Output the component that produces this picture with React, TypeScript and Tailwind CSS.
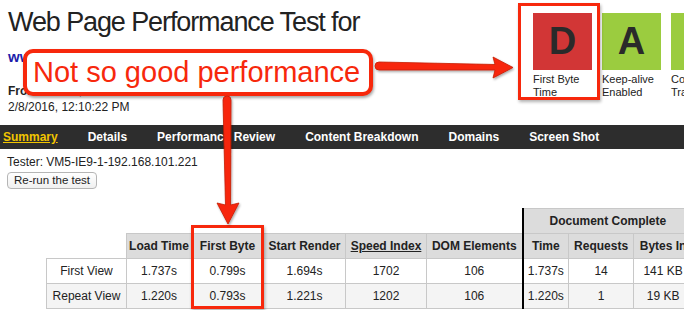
const red = "#f7280c";

function GradeTile({ grade, color, label }: { grade: string; color: string; label: string[] }) {
  return (
    <div className="w-[59px] shrink-0">
      <div className="h-[57px] flex items-center justify-center text-[38px] font-bold text-[#2a2a2a]" style={{ backgroundColor: color }}>
        {grade}
      </div>
      <div className="mt-[3px] text-[11px] leading-[12.5px] text-[#222] whitespace-nowrap">
        {label[0]}
        <br />
        {label[1]}
      </div>
    </div>
  );
}

const th = "bg-[#dcdcdc] border border-[#c8c8c8] font-bold text-[12px] text-center px-0 whitespace-nowrap";
const td = "border border-[#c8c8c8] text-[12px] text-center whitespace-nowrap";
const thick = "border-l-2 border-l-black";

export default function App() {
  const rows = [
    { name: "First View", vals: ["1.737s", "0.799s", "1.694s", "1702", "106", "1.737s", "14", "141 KB"], bg: "bg-white" },
    { name: "Repeat View", vals: ["1.220s", "0.793s", "1.221s", "1202", "106", "1.220s", "1", "19 KB"], bg: "bg-[#f4f4f4]" },
  ];

  return (
    <div className="relative w-[684px] h-[310px] overflow-hidden bg-white text-[#222] font-['Liberation_Sans',Arial,sans-serif]">
      <div className="flex">
        <div className="w-[533px] shrink-0 pl-[8px] pt-[6px]">
          <h1 className="text-[27px] leading-[32px] tracking-[-1.1px] whitespace-nowrap">Web Page Performance Test for</h1>
          <div className="mt-[10px] text-[15px] leading-[18px] font-bold text-[#1d1dab]">www.webpagetest.org</div>
          <div className="mt-[17px] text-[12px] leading-[16px]">
            <b>From:</b> Dulles, VA - IE 9 - Cable
          </div>
          <div className="text-[12px] leading-[16px]">2/8/2016, 12:10:22 PM</div>
        </div>
        <div className="flex gap-[10px] pt-[13px] shrink-0">
          <GradeTile grade="D" color="#d23636" label={["First Byte", "Time"]} />
          <GradeTile grade="A" color="#9bcc3f" label={["Keep-alive", "Enabled"]} />
          <GradeTile grade="A" color="#9bcc3f" label={["Compress", "Transfer"]} />
        </div>
      </div>

      <nav className="mt-[10px] h-[24px] bg-[#2d2d2d] flex items-center gap-[30px] pl-[3px] text-[12px] font-bold text-white whitespace-nowrap">
        <span className="text-[#f2c500] underline">Summary</span>
        <span>Details</span>
        <span>Performance Review</span>
        <span>Content Breakdown</span>
        <span>Domains</span>
        <span>Screen Shot</span>
      </nav>

      <div className="mt-[6px] pl-[7px] text-[12px] leading-[15px]">Tester: VM5-IE9-1-192.168.101.221</div>
      <div className="flex pl-[7px] mt-[2px]">
        <button className="h-[17px] px-[6px] text-[11.5px] leading-[15px] border border-[#b5b5b5] rounded-[4px] bg-gradient-to-b from-white to-[#f0f0f0]">
          Re-run the test
        </button>
      </div>

      <table className="mt-[19px] ml-[46px] border-collapse table-fixed w-[646px]">
        <colgroup>
          <col className="w-[80px]" />
          <col className="w-[65px]" />
          <col className="w-[72px]" />
          <col className="w-[82px]" />
          <col className="w-[81px]" />
          <col className="w-[96px]" />
          <col className="w-[46px]" />
          <col className="w-[65px]" />
          <col className="w-[59px]" />
        </colgroup>
        <thead>
          <tr className="h-[25px]">
            <th colSpan={6}></th>
            <th colSpan={3} className={`${th} ${thick}`}>Document Complete</th>
          </tr>
          <tr className="h-[25px]">
            <th></th>
            <th className={th}>Load Time</th>
            <th className={th}>First Byte</th>
            <th className={th}>Start Render</th>
            <th className={th}><span className="underline">Speed Index</span></th>
            <th className={th}>DOM Elements</th>
            <th className={`${th} ${thick}`}>Time</th>
            <th className={th}>Requests</th>
            <th className={th}>Bytes In</th>
          </tr>
        </thead>
        <tbody>
          {rows.map((r) => (
            <tr key={r.name} className={`h-[25px] ${r.bg}`}>
              <td className={td}>{r.name}</td>
              {r.vals.map((v, i) => (
                <td key={i} className={`${td} ${i === 5 ? thick : ""}`}>{v}</td>
              ))}
            </tr>
          ))}
        </tbody>
      </table>

      {/* annotations */}
      <div className="absolute left-[23px] top-[49px] w-[350px] h-[47px] border-4 rounded-[10px] bg-white shadow-[1px_2px_3px_rgba(0,0,0,0.35)] flex items-center pl-[6px]" style={{ borderColor: red }}>
        <span className="text-[29px] leading-none whitespace-nowrap" style={{ color: red }}>Not so good performance</span>
      </div>
      <div className="absolute left-[518px] top-[3px] w-[82px] h-[97px] border-[3px] shadow-[1px_2px_3px_rgba(0,0,0,0.3)]" style={{ borderColor: red }} />
      <div className="absolute left-[191px] top-[225px] w-[73px] h-[84px] border-[3px] shadow-[1px_2px_3px_rgba(0,0,0,0.3)]" style={{ borderColor: red }} />

      <svg className="absolute inset-0 pointer-events-none" width="684" height="310" viewBox="0 0 684 310">
        <defs>
          <filter id="sh" x="-10%" y="-10%" width="130%" height="130%">
            <feDropShadow dx="1" dy="1.5" stdDeviation="1.2" floodColor="#000" floodOpacity="0.35" />
          </filter>
        </defs>
        <g filter="url(#sh)" fill={red} stroke="#c51a04" strokeWidth="0.8" strokeLinejoin="round">
          <path d="M379,62 L495,64.5 L493,57 L513,67.5 L493,78 L495,70 L379,70 A4,4 0 0 1 379,62 Z" />
          <path d="M223,100 A4,4 0 0 1 231,100 L230.5,205 L239,203 L228,224 L217,203 L225.5,205 Z" />
        </g>
      </svg>
    </div>
  );
}
